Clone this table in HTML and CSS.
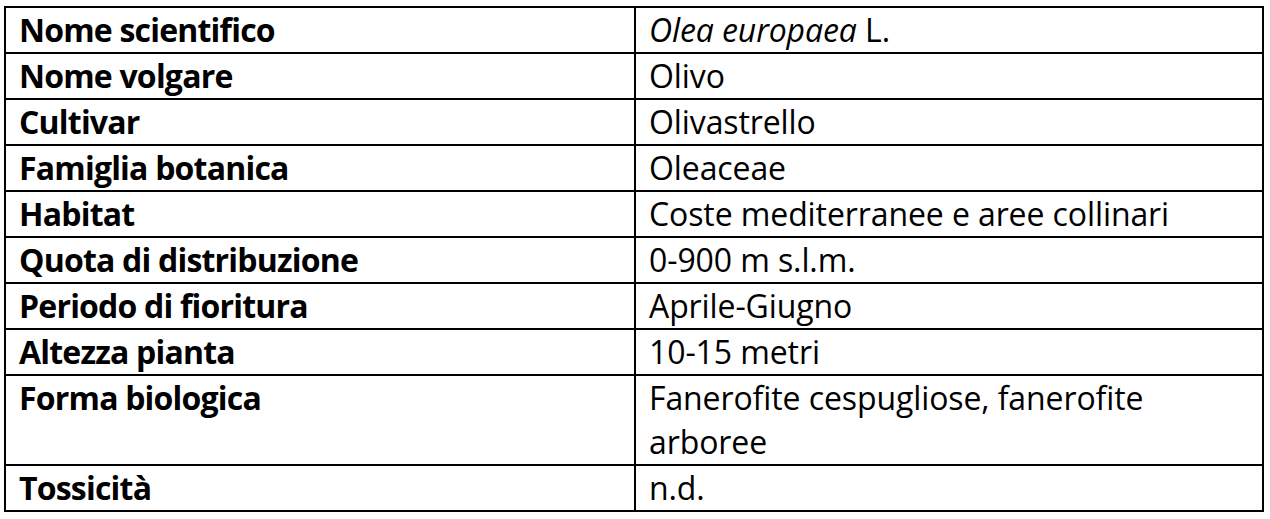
FILE: index.html
```html
<!DOCTYPE html>
<html lang="it">
<head>
<meta charset="utf-8">
<title>Olea europaea</title>
<link rel="stylesheet" href="styles.css">
</head>
<body>
<table class="scheda">
  <tr><th>Nome scientifico</th><td><i>Olea europaea</i> L.</td></tr>
  <tr><th>Nome volgare</th><td>Olivo</td></tr>
  <tr><th>Cultivar</th><td>Olivastrello</td></tr>
  <tr><th>Famiglia botanica</th><td>Oleaceae</td></tr>
  <tr><th>Habitat</th><td>Coste mediterranee e aree collinari</td></tr>
  <tr><th>Quota di distribuzione</th><td>0-900 m s.l.m.</td></tr>
  <tr><th>Periodo di fioritura</th><td>Aprile-Giugno</td></tr>
  <tr><th>Altezza pianta</th><td>10-15 metri</td></tr>
  <tr><th>Forma biologica</th><td>Fanerofite cespugliose, fanerofite<br>arboree</td></tr>
  <tr><th>Tossicità</th><td>n.d.</td></tr>
</table>
</body>
</html>
```
FILE: styles.css
```css
html, body {
  margin: 0;
  padding: 0;
  background: #ffffff;
}
body {
  padding: 6px 0 0 4px;
  font-family: "Open Sans", "Liberation Sans", sans-serif;
  color: #000;
}
.scheda {
  border-collapse: collapse;
  width: 1260px;
  table-layout: fixed;
}
.scheda th,
.scheda td {
  border: 2px solid #000;
  padding: 0 0 0 13px;
  font-size: 32px;
  line-height: 44px;
  vertical-align: top;
  text-align: left;
}
.scheda th {
  width: 615px;
  font-weight: 700;
  letter-spacing: -0.8px;
}
.scheda td {
  font-weight: normal;
  letter-spacing: -0.1px;
}
```
